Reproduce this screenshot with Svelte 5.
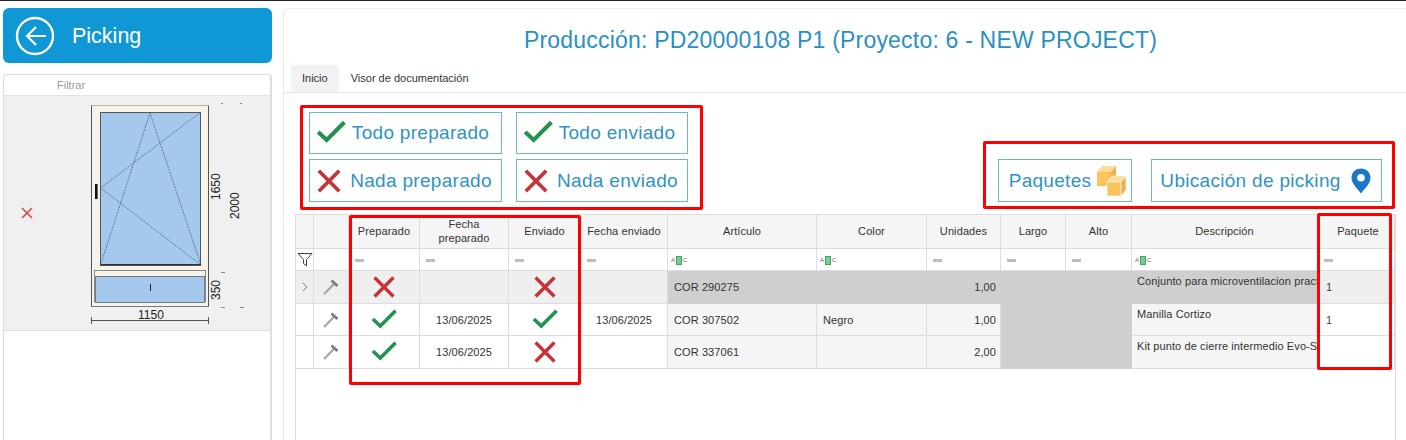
<script>
  const cols = [18, 35, 71, 89, 72, 87, 149, 110, 74, 65, 66, 186, 77];
  const grid = cols.map((c) => c + 'px').join(' ');
  const heads = ['', '', 'Preparado', 'Fecha\npreparado', 'Enviado', 'Fecha enviado', 'Artículo', 'Color', 'Unidades', 'Largo', 'Alto', 'Descripción', 'Paquete'];
  const filters = ['filter', '', 'dash', 'dash', 'dash', 'dash', 'abc', 'abc', 'dash', 'dash', 'dash', 'abc', 'dash'];
  const rows = [
    { sel: true, prep: false, fp: '', env: false, fe: '', art: 'COR 290275', color: '', uds: '1,00', desc: 'Conjunto para microventilacion practicable', paq: '1' },
    { sel: false, prep: true, fp: '13/06/2025', env: true, fe: '13/06/2025', art: 'COR 307502', color: 'Negro', uds: '1,00', desc: 'Manilla Cortizo', paq: '1' },
    { sel: false, prep: true, fp: '13/06/2025', env: false, fe: '', art: 'COR 337061', color: '', uds: '2,00', desc: 'Kit punto de cierre intermedio Evo-Security', paq: '' }
  ];
</script>

{#snippet check(size)}
  <svg class="ico" width={size} height={size} viewBox="0 0 28 28"><path d="M2 13 L10 20.5 L26.5 4" fill="none" stroke="#23914f" stroke-width="3.8"/></svg>
{/snippet}
{#snippet cross(size)}
  <svg class="ico" width={size} height={size} viewBox="0 0 28 28"><path d="M3 3 L25 25 M25 3 L3 25" fill="none" stroke="#c4343a" stroke-width="4"/></svg>
{/snippet}
{#snippet hammer()}
  <svg width="16" height="16" viewBox="0 0 16 16"><path d="M1 15 L11 5" stroke="#a8a8a8" stroke-width="2.4" fill="none"/><path d="M8.5 1.5 L14.5 7" stroke="#7d7d7d" stroke-width="2.8" fill="none"/></svg>
{/snippet}

<div class="page">
  <aside class="side">
    <header class="back">
      <svg width="40" height="40" viewBox="0 0 40 40"><circle cx="20" cy="20" r="18" fill="none" stroke="#fff" stroke-width="2.4"/><path d="M31 20 H12 M21 11 L12 20 L21 29" fill="none" stroke="#fff" stroke-width="2.2"/></svg>
      <span>Picking</span>
    </header>
    <section class="thumbs">
      <div class="filtrar">Filtrar</div>
      <div class="thumb">
        <svg class="x" width="12" height="12" viewBox="0 0 12 12"><path d="M1 1 L11 11 M11 1 L1 11" stroke="#dc4a4a" stroke-width="1.7"/></svg>
        <svg class="win" width="160" height="228" viewBox="0 0 160 228">
          <rect x="0" y="7" width="118" height="202" fill="#f5f3ea"/>
          <path d="M.5 7 V209 M117.5 7 V209" stroke="#555"/>
          <path d="M.5 7.5 H117.5" stroke="#b5b5b0"/>
          <path d="M.5 208.5 H117.5" stroke="#777"/>
          <rect x="9.5" y="14.5" width="100" height="152" fill="#a5c9ec" stroke="#556"/>
          <path d="M9 167 H110" stroke="#222" stroke-width="1.6"/>
          <rect x="3.5" y="172.5" width="111" height="31" fill="#f5f3ea" stroke="#8a8a85"/>
          <rect x="4.5" y="178.5" width="109" height="26" fill="#a5c9ec" stroke="#778"/>
          <path d="M59.5 186 V193" stroke="#222"/>
          <path d="M9.5 167 L59 15 L110 167 M110 14 L9.5 90 L110 167" fill="none" stroke="#40566e" stroke-width=".7" stroke-dasharray="2 1"/>
          <rect x="4" y="86" width="2.6" height="15" fill="#111"/>
          <text transform="translate(129 102) rotate(-90)" class="dim">1650</text>
          <text transform="translate(148 121) rotate(-90)" class="dim">2000</text>
          <text transform="translate(129 202) rotate(-90)" class="dim">350</text>
          <text x="47" y="221" class="dim">1150</text>
          <path d="M.5 222.5 H118 M.5 219 V226 M117.5 219 V226" stroke="#555" fill="none"/>
          <path d="M130 5.5 h2 M149 5.5 h2 M130 174.5 h4 M130 209.5 h4 M149 209.5 h4" stroke="#888"/>
        </svg>
      </div>
    </section>
  </aside>

  <main class="main">
    <h1>Producción: PD20000108 P1 (Proyecto: 6 - NEW PROJECT)</h1>
    <nav class="tabs">
      <span class="tab active">Inicio</span>
      <span class="tab">Visor de documentación</span>
    </nav>
    <div class="toolbar">
      <div class="left-btns">
        <button>{@render check(30)}<span>Todo preparado</span></button>
        <button>{@render check(30)}<span>Todo enviado</span></button>
        <button class="no">{@render cross(26)}<span>Nada preparado</span></button>
        <button class="no">{@render cross(26)}<span>Nada enviado</span></button>
      </div>
      <div class="right-btns">
        <button class="paq"><span>Paquetes</span>
          <svg width="30" height="30" viewBox="0 0 30 30">
            <path d="M0 6 L5 0 H19 L14 6 Z" fill="#fcdc96"/><path d="M0 6 H14 V20 H0 Z" fill="#fcc45a"/><path d="M14 6 L19 0 V14 L14 20 Z" fill="#eeb04a"/>
            <g stroke="#fff" stroke-width=".6"><path d="M10 16 L15 10 H29 L24 16 Z" fill="#fcdc96"/><path d="M10 16 H24 V30 H10 Z" fill="#fcc45a"/><path d="M24 16 L29 10 V24 L24 30 Z" fill="#eeb04a"/></g>
          </svg>
        </button>
        <button class="ubi"><span>Ubicación de picking</span>
          <svg width="20" height="26" viewBox="0 0 20 26"><path fill-rule="evenodd" d="M10 0.5 C4.6 0.5 .5 4.6 .5 9.8 C.5 16 7 21 10 25.5 C13 21 19.5 16 19.5 9.8 C19.5 4.6 15.4 .5 10 .5 Z M10 6 A3.8 3.8 0 1 1 10 13.6 A3.8 3.8 0 1 1 10 6 Z" fill="#1c75c8"/></svg>
        </button>
      </div>
    </div>

    <div class="table" style="grid-template-columns:{grid}">
      {#each heads as h}
        <div class="cell head">{h}</div>
      {/each}
      {#each filters as f}
        <div class="cell filter" class:fic={f === 'filter'}>
          {#if f === 'filter'}
            <svg width="16" height="15" viewBox="0 0 16 15"><path d="M1 1.5 H15 L9.5 7.5 V14 L6.5 11.5 V7.5 Z" fill="none" stroke="#444"/></svg>
          {:else if f === 'dash'}
            <i class="dash"></i>
          {:else if f === 'abc'}
            <span class="abc"><small>A</small><b></b><small>C</small></span>
          {/if}
        </div>
      {/each}
      {#each rows as r}
        <div class="cell row" class:sel={r.sel}>{#if r.sel}<svg width="6" height="10" viewBox="0 0 6 10"><path d="M1 1 L5 5 L1 9" fill="none" stroke="#777"/></svg>{/if}</div>
        <div class="cell row" class:sel={r.sel}>{@render hammer()}</div>
        <div class="cell row" class:sel={r.sel}>{#if r.prep}{@render check(26)}{:else}{@render cross(24)}{/if}</div>
        <div class="cell row" class:sel={r.sel}>{r.fp}</div>
        <div class="cell row" class:sel={r.sel}>{#if r.env}{@render check(26)}{:else}{@render cross(24)}{/if}</div>
        <div class="cell row" class:sel={r.sel}>{r.fe}</div>
        <div class="cell row tl ro" class:dk={r.sel}>{r.art}</div>
        <div class="cell row tl ro" class:dk={r.sel}>{r.color}</div>
        <div class="cell row tr ro" class:dk={r.sel}>{r.uds}</div>
        <div class="cell row dk"></div>
        <div class="cell row dk"></div>
        <div class="cell row desc ro" class:dk={r.sel}>{r.desc}</div>
        <div class="cell row paqc" class:sel={r.sel}>{r.paq}</div>
      {/each}
    </div>

    <div class="mark m1"></div>
    <div class="mark m2"></div>
    <div class="mark m3"></div>
    <div class="mark m4"></div>
  </main>
</div>

<style>
  :global(body) { margin: 0; background: #fff; font-family: "Liberation Sans", Arial, sans-serif; overflow: hidden; }
  .page { position: relative; width: 1406px; height: 440px; overflow: hidden; box-sizing: border-box; border-top: 1px solid #222; display: flex; padding: 7px 0 0 3px; gap: 11px; }
  .side { width: 269px; display: flex; flex-direction: column; gap: 11px; flex: none; }
  .back { height: 55px; background: #0f97d6; border-radius: 6px; display: flex; align-items: center; gap: 17px; padding-left: 12px; color: #fff; font-size: 21.5px; flex: none; }
  .back span { padding-top: 1px; }
  .thumbs { flex: 1; border: 1px solid #dedede; border-right-width: 2px; border-bottom: 0; border-radius: 4px 4px 0 0; }
  .filtrar { height: 21px; font-size: 11px; line-height: 21px; color: #999; padding-left: 53px; border-bottom: 1px solid #e2e2e2; box-sizing: border-box; }
  .thumb { height: 235px; background: #f0f0f0; border-bottom: 1px solid #e0e0e0; box-sizing: border-box; display: flex; align-items: flex-start; position: relative; }
  .x { position: absolute; left: 17px; top: 111px; }
  .win { margin-left: 87px; margin-top: 2px; }
  .dim { font: 12px "Liberation Sans", sans-serif; fill: #222; }
  .main { flex: 1; min-width: 0; border-left: 1px solid #e8e8e8; border-top: 1px solid #eee; border-radius: 5px 0 0 0; position: relative; }
  h1 { margin: 0; height: 56px; box-sizing: border-box; padding: 18px 9px 0 0; text-align: center; font-weight: 400; font-size: 23px; line-height: 27px; color: #2a8fc2; letter-spacing: .2px; }
  .tabs { height: 28px; border-bottom: 1px solid #e4e4e4; box-sizing: border-box; display: flex; padding-left: 7px; align-items: flex-end; }
  .tab { font-size: 11px; height: 27px; line-height: 26px; padding: 0 11px; color: #333; }
  .tab.active { background: #f2f2f2; border-radius: 3px 3px 0 0; margin-right: 1px; }
  .toolbar { display: flex; justify-content: space-between; align-items: flex-end; height: 121px; padding: 19px 24px 12px 25px; box-sizing: border-box; }
  .left-btns { display: grid; grid-template-columns: 193px 172px; grid-template-rows: 42px 43px; gap: 5px 14px; }
  .left-btns button { padding-right: 6px; }
  .left-btns button.no { padding-right: 3px; gap: 8px; }
  .right-btns { display: flex; gap: 19px; height: 43px; }
  button { font: 19px "Liberation Sans", sans-serif; color: #2f93c4; background: #fff; border: 1px solid #6cb5d2; display: flex; align-items: center; justify-content: center; gap: 6px; padding: 0; letter-spacing: .3px; }
  .paq { width: 134px; padding-left: 6px; }
  .ubi { width: 231px; gap: 10px; padding-right: 2px; }
  .table { display: grid; margin-left: 11px; width: 1101px; border-left: 1px solid #ddd; border-right: 1px solid #ddd; border-top: 1px solid #ddd; box-sizing: border-box; height: 250px; align-content: start; grid-template-rows: 34px 22px 33px 32px 33px; font-size: 11px; letter-spacing: .1px; color: #333; }
  .cell { border-right: 1px solid #ddd; border-bottom: 1px solid #ddd; box-sizing: border-box; display: flex; align-items: center; justify-content: center; min-width: 0; overflow: hidden; white-space: nowrap; }
  .head { background: #f5f5f5; white-space: pre-line; text-align: center; line-height: 13.5px; }
  .head:nth-child(13) { padding-left: 4px; }
  .filter { background: #fff; justify-content: flex-start; padding-left: 6px; }
  .filter.fic { padding: 0; justify-content: center; }
  .dash { width: 9px; height: 3px; background: #bdbdbd; margin-top: 1px; }
  .abc { display: flex; align-items: center; gap: 1px; margin-left: -3px; margin-top: 1px; }
  .abc small { font-size: 6px; color: #666; letter-spacing: 0; }
  .abc b { width: 6px; height: 9px; background: #7ccb95; border: 1px solid #3fa564; box-sizing: border-box; }
  .row.sel { background: #efefef; }
  .ro { background: #f5f5f5; }
  .dk { background: #cfcfcf; border-right-color: #cfcfcf; border-bottom-color: #cfcfcf; }
  .tl { justify-content: flex-start; padding-left: 6px; }
  .tr { justify-content: flex-end; padding-right: 4px; }
  .paqc { justify-content: flex-start; padding-left: 8px; color: #444; }
  .desc { justify-content: flex-start; align-items: flex-start; padding: 4px 0 0 5px; }
  .ico { display: block; }
  .mark { position: absolute; border: 3px solid #f00; box-sizing: border-box; border-radius: 2px; pointer-events: none; }
  .m1 { left: 16px; top: 96px; width: 403px; height: 105px; }
  .m2 { left: 699px; top: 132px; width: 412px; height: 68px; }
  .m3 { left: 65px; top: 206px; width: 232px; height: 170px; }
  .m4 { left: 1033px; top: 204px; width: 75px; height: 157px; }
</style>
